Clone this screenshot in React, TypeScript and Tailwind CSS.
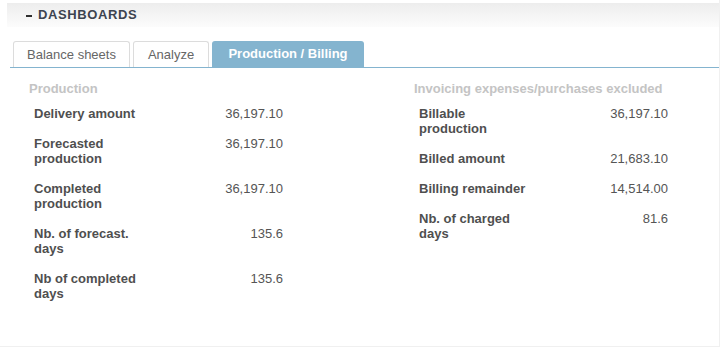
const production = [
  { label: "Delivery amount", value: "36,197.10" },
  { label: "Forecasted production", value: "36,197.10" },
  { label: "Completed production", value: "36,197.10" },
  { label: "Nb. of forecast. days", value: "135.6" },
  { label: "Nb of completed days", value: "135.6" },
];

const invoicing = [
  { label: "Billable production", value: "36,197.10" },
  { label: "Billed amount", value: "21,683.10" },
  { label: "Billing remainder", value: "14,514.00" },
  { label: "Nb. of charged days", value: "81.6" },
];

function Column({ title, rows, className }: { title: string; rows: { label: string; value: string }[]; className: string }) {
  return (
    <div className={className}>
      <h3 className="text-[13px] leading-[15px] font-bold text-[#c4c4c4]">{title}</h3>
      <div className="mt-[10px] flex flex-col gap-[15px] pl-[5px]">
        {rows.map((r) => (
          <div key={r.label} className="flex">
            <div className="w-[115px] text-[13px] leading-[15px] font-bold text-[#4f4f4f]">{r.label}</div>
            <div className="w-[134px] text-right text-[13px] leading-[15px] text-[#555555]">{r.value}</div>
          </div>
        ))}
      </div>
    </div>
  );
}

export default function App() {
  const tabs = [
    { name: "Balance sheets", w: "w-[117px]" },
    { name: "Analyze", w: "w-[76px]" },
  ];
  return (
    <div className="h-[348px] w-[721px] overflow-hidden bg-white font-['Liberation_Sans',Arial,sans-serif]">
      <div className="h-[347px] w-[720px] border-r border-b border-[#f0f0f0] pl-[7px] pt-[3px]">
        {/* Header */}
        <div className="flex h-[24px] items-center gap-[6px] bg-gradient-to-b from-[#ededed] to-[#fcfcfc] pl-[19px]">
          <span className="mt-[1px] block h-[2px] w-[6px] bg-[#2f2f2f]"></span>
          <span className="text-[13px] font-bold uppercase tracking-[0.6px] text-[#3d4450]">Dashboards</span>
        </div>

        {/* Tabs */}
        <div className="mt-[14px] ml-[3px] flex gap-[3px] border-b border-[#84b4cf] pl-[3px]">
          {tabs.map((t) => (
            <div
              key={t.name}
              className={`${t.w} flex h-[26px] items-center justify-center rounded-t-[3px] border border-b-0 border-[#dcdcdc] bg-white text-[13px] text-[#666666]`}
            >
              {t.name}
            </div>
          ))}
          <div className="flex h-[26px] w-[152px] items-center justify-center rounded-t-[3px] bg-[#84b4cf] text-[13px] font-bold text-white">
            Production / Billing
          </div>
        </div>

        {/* Content */}
        <div className="flex pt-[13px] pl-[22px]">
          <Column className="w-[385px] shrink-0" title="Production" rows={production} />
          <Column className="min-w-0 flex-1" title="Invoicing expenses/purchases excluded" rows={invoicing} />
        </div>
      </div>
    </div>
  );
}
